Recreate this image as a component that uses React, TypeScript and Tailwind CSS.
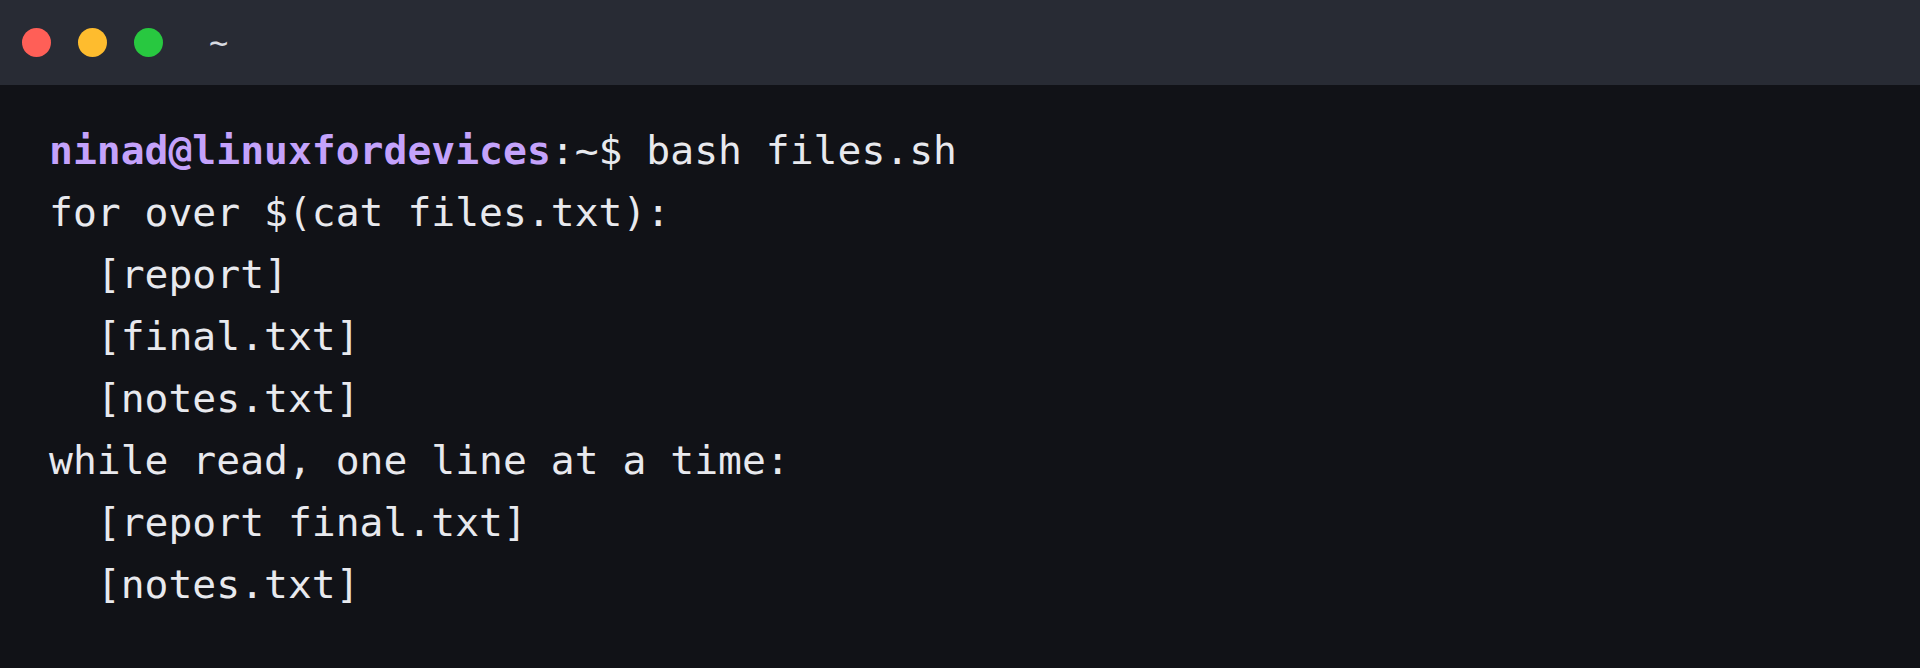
const lines: { text: string; indent?: boolean }[] = [
  { text: 'for over $(cat files.txt):' },
  { text: '[report]', indent: true },
  { text: '[final.txt]', indent: true },
  { text: '[notes.txt]', indent: true },
  { text: 'while read, one line at a time:' },
  { text: '[report final.txt]', indent: true },
  { text: '[notes.txt]', indent: true },
]

export default function App() {
  return (
    <div className="w-[1920px] h-[668px] bg-[#111217] flex flex-col overflow-hidden">
      {/* Title bar */}
      <div className="h-[85px] bg-[#282b34] flex items-center pl-[22px] shrink-0">
        <div className="flex items-center gap-[27px]">
          <span className="w-[29px] h-[29px] rounded-full bg-[#ff5f57]"></span>
          <span className="w-[29px] h-[29px] rounded-full bg-[#febc2e]"></span>
          <span className="w-[29px] h-[29px] rounded-full bg-[#28c840]"></span>
        </div>
        <span className="ml-[46px] text-[32px] text-[#d8dae0] font-['DejaVu_Sans_Mono',monospace] leading-none">~</span>
      </div>

      {/* Terminal body */}
      <div className="pt-[34px] pl-[49px] font-['DejaVu_Sans_Mono','Liberation_Mono',monospace] text-[39.7px] leading-[62px] text-[#e8e9ee] whitespace-pre">
        <div>
          <span className="font-bold text-[#c4a2fb]">ninad@linuxfordevices</span>
          <span>:~$ bash files.sh</span>
        </div>
        {lines.map((line, i) => (
          <div key={i}>{line.indent ? '  ' + line.text : line.text}</div>
        ))}
      </div>
    </div>
  )
}
